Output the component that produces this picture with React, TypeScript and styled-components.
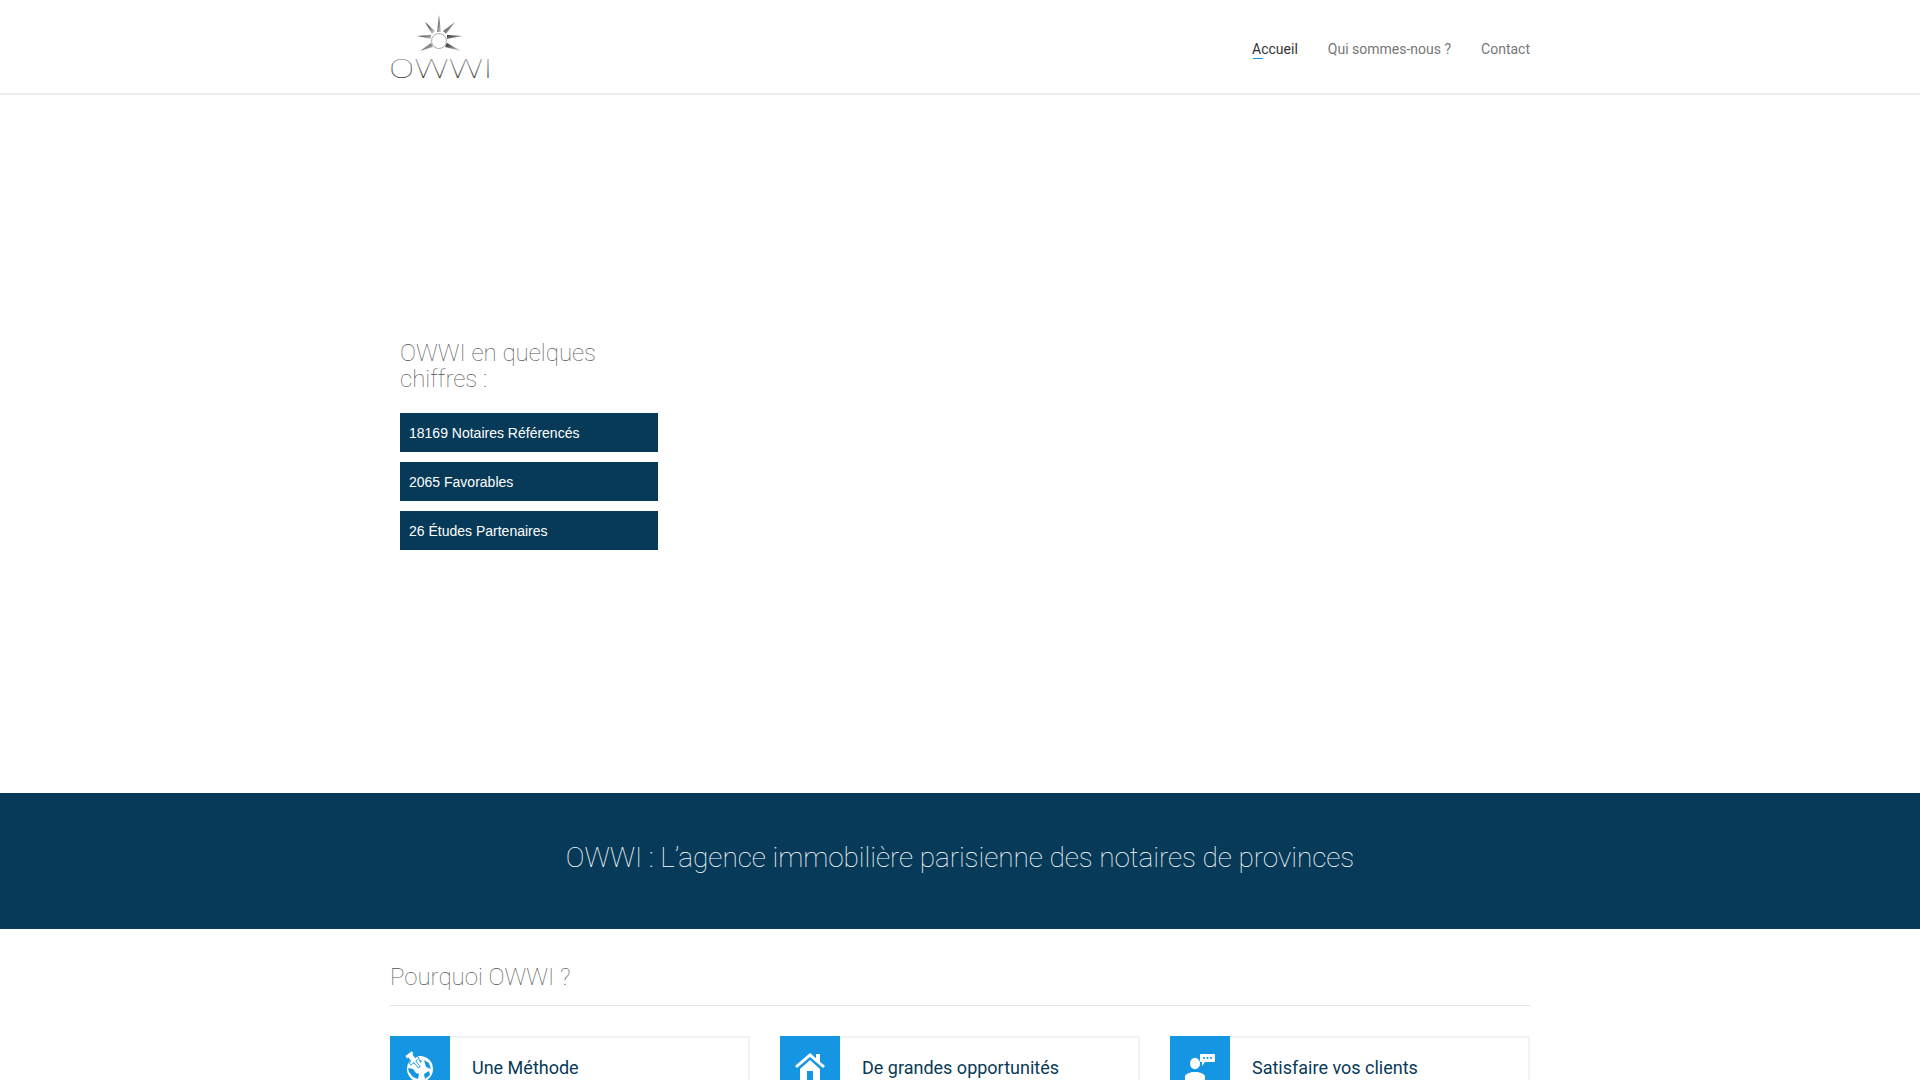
import styled, { createGlobalStyle } from 'styled-components';

const GlobalStyle = createGlobalStyle`
  html, body {
    margin: 0;
    height: 100%;
    overflow: hidden;
    background: #fff;
    font-family: Roboto, "Liberation Sans", sans-serif;
  }
  * { box-sizing: border-box; }
`;

const Page = styled.div`
  height: 1080px;
  overflow: hidden;
`;

const Container = styled.div`
  width: 1140px;
  margin: 0 auto;
`;

const Header = styled.header`
  height: 95px;
  border-bottom: 2px solid #ececec;
`;

const HeaderInner = styled(Container)`
  display: flex;
  align-items: flex-start;
  justify-content: space-between;
  height: 100%;
`;

const Nav = styled.nav`
  display: flex;
  gap: 30px;
  padding-top: 40px;
`;

const NavLink = styled.a<{ $active?: boolean }>`
  position: relative;
  font-size: 14px;
  line-height: 18px;
  color: ${({ $active }) => ($active ? '#333' : '#777')};
  text-decoration: none;

  ${({ $active }) =>
    $active &&
    `&::after {
      content: '';
      position: absolute;
      left: 1px;
      bottom: -1px;
      width: 10px;
      height: 1px;
      background: #1496e3;
    }`}
`;

const Hero = styled.section`
  height: 698px;
`;

const Stats = styled.div`
  width: 258px;
  margin-left: 10px;
  padding-top: 245px;
  display: flex;
  flex-direction: column;
  gap: 10px;
`;

const StatsTitle = styled.h3`
  margin: 0 0 11px;
  font-size: 24px;
  line-height: 26px;
  font-weight: 100;
  color: #555;
`;

const StatRow = styled.div`
  height: 39px;
  padding: 0 9px;
  background: #073a58;
  color: #fff;
  font-family: "Liberation Sans", Arial, sans-serif;
  font-size: 14px;
  line-height: 40px;
`;

const Band = styled.section`
  height: 136px;
  padding-top: 47px;
  background: #073a58;
`;

const BandTitle = styled.h2`
  margin: 0;
  text-align: center;
  font-size: 28px;
  line-height: 36px;
  font-weight: 100;
  letter-spacing: -0.07px;
  color: #fff;
`;

const SectionTitle = styled.h3`
  margin: 0;
  height: 77px;
  padding-top: 33px;
  border-bottom: 1px solid #e5e5e5;
  font-size: 24px;
  line-height: 30px;
  font-weight: 100;
  color: #555;
`;

const Cards = styled.div`
  display: grid;
  grid-template-columns: repeat(3, 360px);
  gap: 30px;
  margin-top: 30px;
`;

const Card = styled.article`
  display: flex;
  height: 160px;
  border: 2px solid #f2f2f2;
  border-left: 0;
`;

const IconBox = styled.div`
  flex: none;
  width: 60px;
  margin: -2px 0;
  background: #1496e3;
  display: flex;
  justify-content: center;
  padding-top: 15px;
  align-items: flex-start;
`;

const CardTitle = styled.h4`
  margin: 0;
  padding: 18px 0 0 22px;
  font-size: 18px;
  line-height: 24px;
  font-weight: 400;
  color: #073a58;
`;

const LogoMark = () => (
  <svg width="104" height="80" viewBox="0 0 104 80" style={{ marginTop: 12 }}>
    <defs>
      <linearGradient id="ray" x1="0" y1="0" x2="1" y2="1">
        <stop offset="0" stopColor="#222" />
        <stop offset="1" stopColor="#ddd" />
      </linearGradient>
      <linearGradient id="word" x1="0" y1="0" x2="0" y2="1">
        <stop offset="0" stopColor="#bbb" />
        <stop offset="1" stopColor="#111" />
      </linearGradient>
    </defs>
    {/* sun rays, centre at 49,29 */}
    <g fill="url(#ray)">
      <polygon points="49,3 47,20 51,20" />
      <polygon points="27,24 41,23 41,27" />
      <polygon points="73,24 57,23 57,27" />
      <polygon points="35,10 42,22 45,19" />
      <polygon points="65,10 53,19 56,22" />
      <polygon points="30,39 41,31 43,35" />
      <polygon points="71,39 57,31 55,35" />
    </g>
    <circle cx="49" cy="29" r="7.500" fill="#fff" stroke="#777" strokeWidth="0.6" />
    <text
      x="-1"
      y="66"
      fontFamily="Roboto, sans-serif"
      fontWeight="100"
      fontSize="26"
      fill="url(#word)"
      textLength="104"
      lengthAdjust="spacingAndGlyphs"
    >
      OWWI
    </text>
  </svg>
);

const GlobeIcon = () => (
  <svg width="34" height="34" viewBox="0 0 34 34">
    <circle cx="17" cy="18" r="13" fill="#fff" />
    <path d="M5 17l5 1 3 4 3 1-1 5-5-2-4-5zM21 9l5 3 2 6-5-2zM21 23l5-3 1 4-5 4zM16 8l3 2-2 2z" fill="#1496e3" />
    <g transform="translate(16 16) rotate(-38)" fill="#fff" stroke="#1496e3" strokeWidth="1.500" paintOrder="stroke">
      <path d="M-0.800 0h1.600v-7H5v-2.200H2.500V-14H4v-3h-8v3h1.500v4.800H-5V-7h4.200z" />
    </g>
  </svg>
);

const HomeIcon = () => (
  <svg width="32" height="30" viewBox="0 0 32 30">
    <path d="M16 2L1 15l2 2L16 6l13 11 2-2-5-4.300V3h-4v4.300z" fill="#fff" />
    <path d="M16 9L6 18v12h7v-10h6v10h7V18z" fill="#fff" />
  </svg>
);

const ClientIcon = () => (
  <svg width="32" height="30" viewBox="0 0 32 30">
    <path d="M17 3h13a1 1 0 0 1 1 1v6a1 1 0 0 1-1 1H21l-3 4v-4h-1a1 1 0 0 1-1-1V4a1 1 0 0 1 1-1z" fill="#fff" />
    <circle cx="20" cy="7" r="1.100" fill="#1496e3" />
    <circle cx="23.500" cy="7" r="1.100" fill="#1496e3" />
    <circle cx="27" cy="7" r="1.100" fill="#1496e3" />
    <ellipse cx="11" cy="12.500" rx="5" ry="5.800" fill="#fff" />
    <path d="M1 29v-3c0-3 4-4 7-5h6c3 1 7 2 7 5v3z" fill="#fff" />
  </svg>
);

const stats = ['18169 Notaires Référencés', '2065 Favorables', '26 Études Partenaires'];

const cards = [
  { title: 'Une Méthode', icon: <GlobeIcon /> },
  { title: 'De grandes opportunités', icon: <HomeIcon /> },
  { title: 'Satisfaire vos clients', icon: <ClientIcon /> },
];

export default function App() {
  return (
    <Page>
      <GlobalStyle />
      <Header>
        <HeaderInner>
          <LogoMark />
          <Nav>
            <NavLink $active>Accueil</NavLink>
            <NavLink>Qui sommes-nous ?</NavLink>
            <NavLink>Contact</NavLink>
          </Nav>
        </HeaderInner>
      </Header>
      <Hero>
        <Container>
          <Stats>
            <StatsTitle>OWWI en quelques chiffres :</StatsTitle>
            {stats.map((s) => (
              <StatRow key={s}>{s}</StatRow>
            ))}
          </Stats>
        </Container>
      </Hero>
      <Band>
        <BandTitle>OWWI : L’agence immobilière parisienne des notaires de provinces</BandTitle>
      </Band>
      <Container>
        <SectionTitle>Pourquoi OWWI ?</SectionTitle>
        <Cards>
          {cards.map((c) => (
            <Card key={c.title}>
              <IconBox>{c.icon}</IconBox>
              <CardTitle>{c.title}</CardTitle>
            </Card>
          ))}
        </Cards>
      </Container>
    </Page>
  );
}
